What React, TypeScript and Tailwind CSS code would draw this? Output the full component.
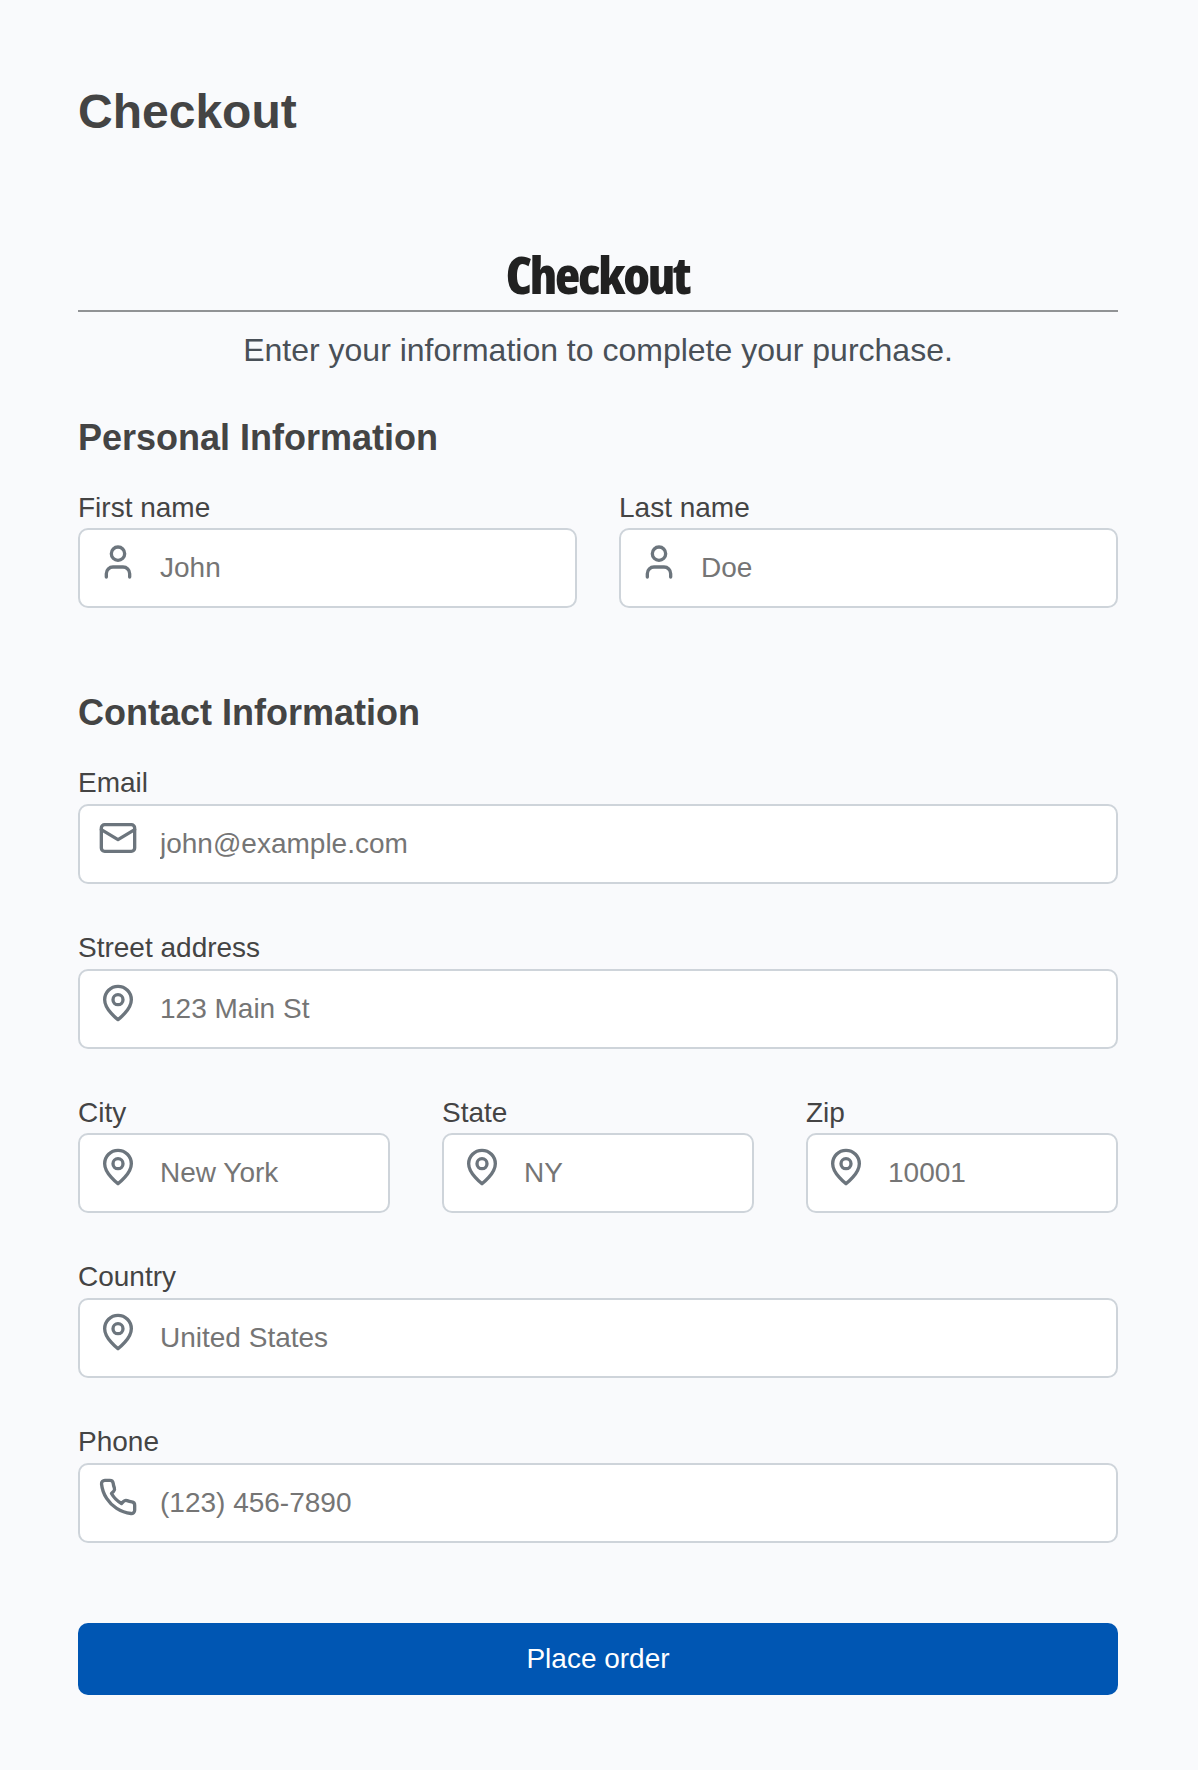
import type { ReactNode } from "react";

function Icon({ children }: { children: ReactNode }) {
  return (
    <svg viewBox="0 0 24 24" fill="none" stroke="currentColor" strokeWidth={2} strokeLinecap="round" strokeLinejoin="round" className="mt-[12px] h-10 w-10 shrink-0 text-[#6c757d]">
      {children}
    </svg>
  );
}

const user = (
  <Icon>
    <path d="M19 21v-2a4 4 0 0 0-4-4H9a4 4 0 0 0-4 4v2" />
    <circle cx="12" cy="7" r="4" />
  </Icon>
);

const mail = (
  <Icon>
    <rect x="2" y="4" width="20" height="16" rx="2" />
    <path d="m22 7-10 6L2 7" />
  </Icon>
);

const pin = (
  <Icon>
    <path d="M20 10c0 6-8 12-8 12s-8-6-8-12a8 8 0 0 1 16 0Z" />
    <circle cx="12" cy="10" r="3" />
  </Icon>
);

const phone = (
  <Icon>
    <path d="M22 16.92v3a2 2 0 0 1-2.18 2 19.79 19.79 0 0 1-8.63-3.07 19.5 19.5 0 0 1-6-6 19.79 19.79 0 0 1-3.07-8.67A2 2 0 0 1 4.11 2h3a2 2 0 0 1 2 1.72 12.84 12.84 0 0 0 .7 2.81 2 2 0 0 1-.45 2.11L8.09 9.91a16 16 0 0 0 6 6l1.27-1.27a2 2 0 0 1 2.11-.45 12.84 12.84 0 0 0 2.81.7A2 2 0 0 1 22 16.92z" />
  </Icon>
);

function Field({ label, placeholder, icon }: { label: string; placeholder: string; icon: ReactNode }) {
  return (
    <label className="block min-w-0 text-[28px] text-[#444444]">
      <span className="block h-[42px]">{label}</span>
      <span className="flex h-20 items-start rounded-[10px] border-2 border-[#ced4da] bg-white pl-[18px]">
        {icon}
        <input placeholder={placeholder} className="ml-[22px] h-[76px] w-full min-w-0 bg-transparent text-[28px] leading-[42px] outline-none placeholder:text-[#757575]" />
      </span>
    </label>
  );
}

export default function App() {
  return (
    <main className="min-h-[1770px] bg-[#f9fafc] pt-20 pr-20 pl-[78px] font-['Liberation_Sans',Arial,sans-serif]">
      <h1 className="text-5xl leading-[64px] font-bold text-[#444444]">Checkout</h1>
      <header className="mt-[98px] text-center">
        <h2 className="h-[70px] border-b-2 border-[#919395] font-['Open_Sans',sans-serif] text-[52px] leading-[64px] font-extrabold text-[#212121]">
          <span className="mr-px inline-block tracking-[-2.2px] font-stretch-75%">Checkout</span>
        </h2>
        <p className="mt-3.5 text-[32px] leading-[48px] text-[#495057]">Enter your information to complete your purchase.</p>
      </header>
      <section className="mt-10">
        <h3 className="text-4xl leading-[48px] font-bold text-[#444444]">Personal Information</h3>
        <div className="mt-6 grid grid-cols-2 gap-[42px] leading-[44px]">
          <Field label="First name" placeholder="John" icon={user} />
          <Field label="Last name" placeholder="Doe" icon={user} />
        </div>
      </section>
      <section className="mt-[81px]">
        <h3 className="text-4xl leading-[48px] font-bold text-[#444444]">Contact Information</h3>
        <div className="mt-[25px] flex flex-col gap-[43px] leading-[42px]">
          <Field label="Email" placeholder="john@example.com" icon={mail} />
          <Field label="Street address" placeholder="123 Main St" icon={pin} />
          <div className="-mt-px grid grid-cols-3 gap-[52px] leading-[44px]">
            <Field label="City" placeholder="New York" icon={pin} />
            <Field label="State" placeholder="NY" icon={pin} />
            <Field label="Zip" placeholder="10001" icon={pin} />
          </div>
          <Field label="Country" placeholder="United States" icon={pin} />
          <Field label="Phone" placeholder="(123) 456-7890" icon={phone} />
        </div>
      </section>
      <button className="mt-20 block h-[72px] w-full rounded-[10px] bg-[#0056b3] text-[28px] text-white">Place order</button>
    </main>
  );
}
